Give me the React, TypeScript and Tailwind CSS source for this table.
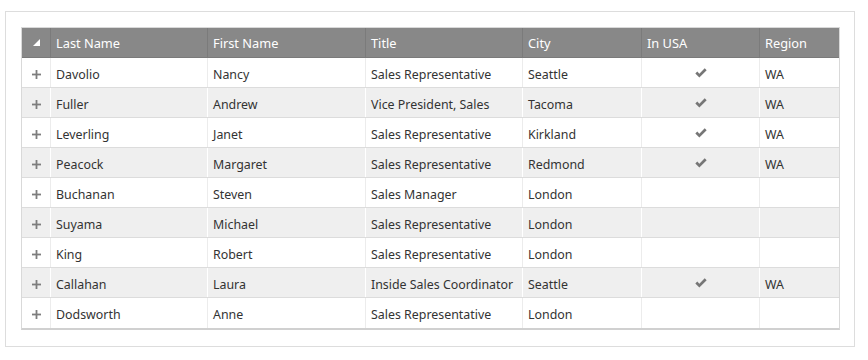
import React from "react";

type Row = { last: string; first: string; title: string; city: string; usa: boolean; region: string };

const rows: Row[] = [
  { last: "Davolio", first: "Nancy", title: "Sales Representative", city: "Seattle", usa: true, region: "WA" },
  { last: "Fuller", first: "Andrew", title: "Vice President, Sales", city: "Tacoma", usa: true, region: "WA" },
  { last: "Leverling", first: "Janet", title: "Sales Representative", city: "Kirkland", usa: true, region: "WA" },
  { last: "Peacock", first: "Margaret", title: "Sales Representative", city: "Redmond", usa: true, region: "WA" },
  { last: "Buchanan", first: "Steven", title: "Sales Manager", city: "London", usa: false, region: "" },
  { last: "Suyama", first: "Michael", title: "Sales Representative", city: "London", usa: false, region: "" },
  { last: "King", first: "Robert", title: "Sales Representative", city: "London", usa: false, region: "" },
  { last: "Callahan", first: "Laura", title: "Inside Sales Coordinator", city: "Seattle", usa: true, region: "WA" },
  { last: "Dodsworth", first: "Anne", title: "Sales Representative", city: "London", usa: false, region: "" },
];

const cols = "grid grid-cols-[29px_157px_158px_157px_119px_118px_79px]";

function Check() {
  return (
    <svg width="12" height="10" viewBox="0 0 11 9">
      <path d="M0.3 5 L2.1 3.2 L4 5.1 L8.9 0.2 L10.7 2 L4 8.7 Z" fill="#767676" />
    </svg>
  );
}

function Plus() {
  return (
    <svg width="9" height="9" viewBox="0 0 9 9">
      <rect x="3.6" y="0" width="1.8" height="9" fill="#7d7d7d" />
      <rect x="0" y="3.6" width="9" height="1.8" fill="#7d7d7d" />
    </svg>
  );
}

export default function App() {
  return (
    <div className="w-[868px] h-[360px] bg-white pt-[11px] pl-[5px]" style={{ fontFamily: '"Noto Sans", "Open Sans", sans-serif' }}>
      <div className="w-[850px] h-[336px] border border-[#dddddd] pt-[15px] pl-[15px]">
        <div className="w-[819px] border border-[#d9d9d9] border-b-2 border-b-[#d0d0d0] text-[12.4px]">
          <div className={`${cols} h-[30px] bg-[#888888] text-white border-b border-b-[#7a7a7a]`}>
            <div className="flex items-center justify-center border-r border-[#7b7b7b]">
              <svg width="7" height="7" viewBox="0 0 7 7">
                <path d="M7 0 L7 7 L0 7 Z" fill="#ffffff" />
              </svg>
            </div>
            {["Last Name", "First Name", "Title", "City", "In USA", "Region"].map((h, i) => (
              <div key={h} className={`flex items-center pl-[5px] pt-[3px] text-[12.8px] ${i < 5 ? "border-r border-[#7b7b7b]" : ""}`}>
                {h}
              </div>
            ))}
          </div>
          {rows.map((r, idx) => {
            const alt = idx % 2 === 1;
            const vb = alt ? "border-white" : "border-[#ececec]";
            return (
              <div
                key={r.last}
                className={`${cols} h-[30px] text-[#333333] ${alt ? "bg-[#efefef]" : "bg-white"} ${idx < rows.length - 1 ? "border-b border-b-[#dcdcdc]" : ""}`}
              >
                <div className={`flex items-center justify-center pt-[3px] border-r ${vb}`}><Plus /></div>
                <div className={`flex items-center pl-[5px] pt-[5px] border-r ${vb}`}>{r.last}</div>
                <div className={`flex items-center pl-[5px] pt-[5px] border-r ${vb}`}>{r.first}</div>
                <div className={`flex items-center pl-[5px] pt-[5px] border-r ${vb}`}>{r.title}</div>
                <div className={`flex items-center pl-[5px] pt-[5px] border-r ${vb}`}>{r.city}</div>
                <div className={`flex items-center justify-center border-r ${vb}`}>{r.usa ? <Check /> : null}</div>
                <div className="flex items-center pl-[5px] pt-[5px]">{r.region}</div>
              </div>
            );
          })}
        </div>
      </div>
    </div>
  );
}
